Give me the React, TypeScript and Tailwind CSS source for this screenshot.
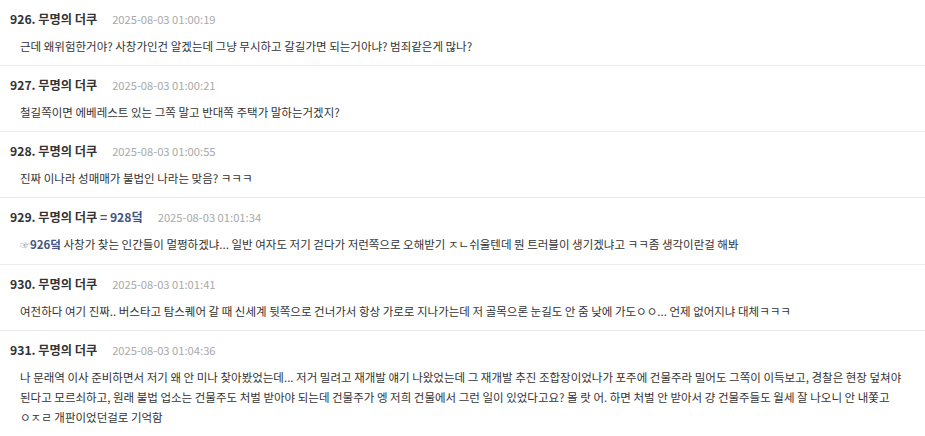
import React from 'react';

type Post = {
  no: number;
  date: string;
  reply?: string;
  body: React.ReactNode;
};

const posts: Post[] = [
  {
    no: 926,
    date: '2025-08-03 01:00:19',
    body: '근데 왜위험한거야? 사창가인건 알겠는데 그냥 무시하고 갈길가면 되는거아냐? 범죄같은게 많나?',
  },
  {
    no: 927,
    date: '2025-08-03 01:00:21',
    body: '철길쪽이면 에베레스트 있는 그쪽 말고 반대쪽 주택가 말하는거겠지?',
  },
  {
    no: 928,
    date: '2025-08-03 01:00:55',
    body: '진짜 이나라 성매매가 불법인 나라는 맞음? ㅋㅋㅋ',
  },
  {
    no: 929,
    date: '2025-08-03 01:01:34',
    reply: '928덬',
    body: (
      <>
        <span className="text-[10px] text-[#9aa6bd]">☞</span>
        <span className="font-bold text-[#44557f]">926덬</span> 사창가 찾는 인간들이 멀쩡하겠냐... 일반 여자도 저기 걷다가 저런쪽으로 오해받기 ㅈㄴ쉬울텐데 뭔 트러블이 생기겠냐고 ㅋㅋ좀 생각이란걸 해봐
      </>
    ),
  },
  {
    no: 930,
    date: '2025-08-03 01:01:41',
    body: '여전하다 여기 진짜.. 버스타고 탐스퀘어 갈 때 신세계 뒷쪽으로 건너가서 항상 가로로 지나가는데 저 골목으론 눈길도 안 줌 낮에 가도ㅇㅇ... 언제 없어지냐 대체ㅋㅋㅋ',
  },
  {
    no: 931,
    date: '2025-08-03 01:04:36',
    body: (
      <>
        나 문래역 이사 준비하면서 저기 왜 안 미나 찾아봤었는데... 저거 밀려고 재개발 얘기 나왔었는데 그 재개발 추진 조합장이었나가 포주에 건물주라 밀어도 그쪽이 이득보고, 경찰은 현장 덮쳐야
        <br />
        된다고 모르쇠하고, 원래 불법 업소는 건물주도 처벌 받아야 되는데 건물주가 엥 저희 건물에서 그런 일이 있었다고요? 몰 랏 어. 하면 처벌 안 받아서 걍 건물주들도 월세 잘 나오니 안 내쫓고
        <br />
        ㅇㅈㄹ 개판이었던걸로 기억함
      </>
    ),
  },
];

function PostItem({ post }: { post: Post }) {
  return (
    <div className="border-b border-[#ececec] pt-[11px] pb-[9px]">
      <div className="flex items-center pl-[10px] h-[16px]">
        <span className="text-[12.2px] font-bold text-[#333]">
          {post.no}. 무명의 더쿠
          {post.reply && <span className="text-[#44557f]"> = {post.reply}</span>}
        </span>
        <span className="ml-[15px] text-[11.2px] text-[#a9a9a9]">{post.date}</span>
      </div>
      <div className="mt-[9px] pl-[20px] pr-[4px] text-[11.5px] leading-[20px] text-[#333]">
        {post.body}
      </div>
    </div>
  );
}

export default function App() {
  return (
    <div className="w-[925px] h-[436px] overflow-hidden bg-white font-['Noto_Sans_CJK_KR','Noto_Sans',sans-serif]">
      {posts.map((p) => (
        <PostItem key={p.no} post={p} />
      ))}
    </div>
  );
}
